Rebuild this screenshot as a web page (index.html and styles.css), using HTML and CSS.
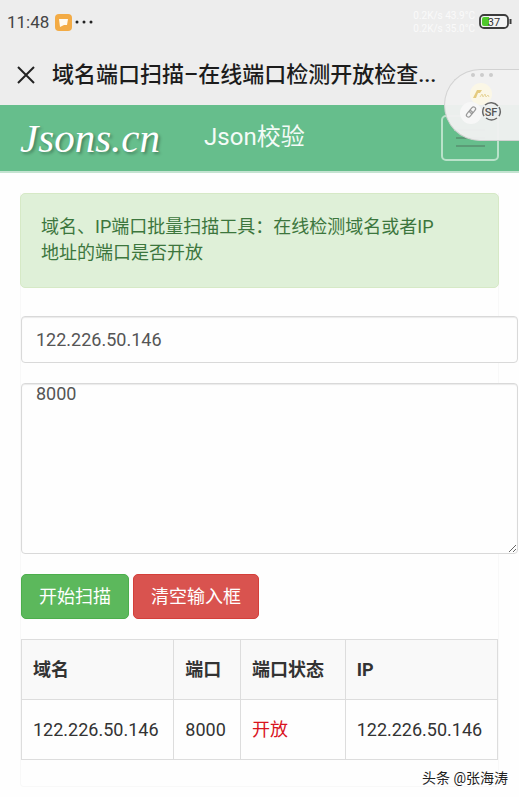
FILE: index.html
```html
<!DOCTYPE html>
<html lang="zh-CN">
<head>
    <meta charset="UTF-8">
    <meta name="viewport" content="width=device-width, initial-scale=1.0">
    <title>域名端口扫描–在线端口检测开放检查</title>
    <link rel="stylesheet" href="styles.css">
</head>
<body>
    <!-- Phone status bar -->
    <div class="status-bar">
        <span class="clock">11:48</span>
        <svg class="app-icon" width="17" height="17" viewBox="0 0 17 17">
            <rect width="17" height="17" rx="4" fill="#f3ab45"/>
            <path d="M4 5h9l-1 6H9l-4 2z" fill="#fffaf0"/>
        </svg>
        <svg class="more-dots" width="18" height="4" viewBox="0 0 18 4">
            <circle cx="2" cy="2" r="1.500"/>
            <circle cx="9" cy="2" r="1.500"/>
            <circle cx="16" cy="2" r="1.500"/>
        </svg>
        <div class="net-speed">
            <div>0.2K/s 43.9°C</div>
            <div>0.2K/s 35.0°C</div>
        </div>
        <svg class="battery" width="33" height="16" viewBox="0 0 33 16">
            <rect x="1" y="1" width="28" height="13" rx="4" fill="#f4f4f4" stroke="#3c3c3c" stroke-width="1.800"/>
            <path d="M5 3h5v9H5a2 2 0 0 1-2-2V5a2 2 0 0 1 2-2z" fill="#4fc92c"/>
            <path d="M31.500 5v5" stroke="#3c3c3c" stroke-width="2"/>
            <text x="15" y="12" text-anchor="middle">37</text>
        </svg>
    </div>

    <!-- Browser title -->
    <div class="title-bar">
        <button class="close-btn" aria-label="关闭">
            <svg width="20" height="20" viewBox="0 0 20 20">
                <path d="M2 2l16 16M18 2L2 18" fill="none" stroke="#222" stroke-width="2"/>
            </svg>
        </button>
        <h1>域名端口扫描–在线端口检测开放检查...</h1>
    </div>

    <nav class="navbar">
        <a class="logo" href="#">Jsons.cn</a>
        <a class="nav-link" href="#">Json校验</a>
        <button class="menu-btn" aria-label="菜单">
            <span class="menu-line"></span>
            <span class="menu-line"></span>
            <span class="menu-line"></span>
        </button>
    </nav>

    <main class="panel">
        <div class="alert">域名、IP端口批量扫描工具：在线检测域名或者IP地址的端口是否开放</div>
        <form class="scan-form">
            <input class="field" type="text" value="122.226.50.146" aria-label="域名">
            <textarea class="field ports" aria-label="端口">8000</textarea>
            <div class="buttons">
                <button class="btn btn-success" type="button">开始扫描</button>
                <button class="btn btn-danger" type="reset">清空输入框</button>
            </div>
        </form>
        <table>
            <thead>
                <tr>
                    <th class="col-host">域名</th>
                    <th class="col-port">端口</th>
                    <th class="col-state">端口状态</th>
                    <th class="col-host">IP</th>
                </tr>
            </thead>
            <tbody>
                <tr>
                    <td>122.226.50.146</td>
                    <td>8000</td>
                    <td class="open">开放</td>
                    <td>122.226.50.146</td>
                </tr>
            </tbody>
        </table>
    </main>

    <!-- Floating shortcut -->
    <div class="float-ball">
        <svg width="75" height="72" viewBox="0 0 75 72">
            <g fill="#ccc">
                <circle cx="28" cy="5" r="2"/>
                <circle cx="37" cy="5" r="2"/>
                <circle cx="46" cy="5" r="2"/>
            </g>
            <circle cx="36" cy="24" r="11" fill="#fbf7e6"/>
            <path d="M28 28l4-8h5l-2 3h-2l-2 5z" fill="#e5cb7e"/>
            <path d="M35 27l2-3 1 3 2-3 1 3 2-2 1 2" fill="none" stroke="#e8d79e" stroke-width="1"/>
            <circle cx="26" cy="43" r="11" fill="#f7f7f7"/>
            <g transform="rotate(-50 26 42)" fill="none" stroke="#999" stroke-width="1.200">
                <rect x="20" y="40" width="7" height="4" rx="2"/>
                <rect x="25" y="40" width="7" height="4" rx="2"/>
            </g>
            <g fill="none" stroke="#696969" stroke-width="1.500">
                <path d="M40 35a9 9 0 0 1 13 1"/>
                <path d="M54 37a9 9 0 0 1 0 9"/>
                <path d="M52 48a9 9 0 0 1-11 0"/>
                <path d="M39 46a9 9 0 0 1 0-9"/>
            </g>
            <text x="46" y="46" text-anchor="middle">SF</text>
        </svg>
    </div>

    <div class="watermark">头条 @张海涛</div>
</body>
</html>
```

FILE: styles.css
```css
* { margin: 0; padding: 0; box-sizing: border-box; }
body { position: relative; min-height: 100vh; font-family: Roboto, "Noto Sans CJK SC", sans-serif; font-size: 18px; line-height: 26px; color: #333; background: #fefefe; }
button, input, textarea { font: inherit; }

.status-bar { display: flex; align-items: center; height: 44px; padding: 0 7px; background: #ededed; }
.clock { font-size: 17px; color: #444; }
.app-icon { margin-left: 6px; }
.more-dots { margin-left: 3px; fill: #222; }
.net-speed { margin-left: auto; font-size: 10px; line-height: 13px; color: #fafafa; }
.battery { margin-left: 4px; }
.battery text { font-size: 11px; fill: #333; }

.title-bar { display: flex; align-items: center; height: 61px; padding: 0 16px; gap: 16px; background: #ededed; }
.title-bar h1 { font-size: 22px; font-weight: 500; color: #1c1c1c; white-space: nowrap; }
.close-btn { display: flex; background: none; border: none; cursor: pointer; }

.navbar { display: flex; align-items: flex-start; height: 68px; padding: 10px 20px; background: #66be8c; border-bottom: 2px solid #c4e3d1; }
.logo { font-family: "Liberation Serif", serif; font-style: italic; font-size: 41px; line-height: 46px; color: #fff; text-decoration: none; text-shadow: 2px 2px 3px rgba(0,0,0,0.3); }
.nav-link { margin-left: 44px; font-size: 24px; line-height: 44px; color: #f4fbf7; text-decoration: none; }
.menu-btn { display: flex; flex-direction: column; align-items: center; justify-content: center; gap: 6px; width: 58px; height: 46px; margin-left: auto; background: none; border: 2px solid #b9e2ca; border-radius: 5px; cursor: pointer; }
.menu-line { width: 29px; height: 2px; background: #5b9b76; }

.panel { margin: 0 20px; padding-bottom: 26px; border: 1px solid #f8f8f8; border-top: none; border-radius: 0 0 4px 4px; }
.alert { margin: 20px -1px 28px; padding: 20px 48px 21px 20px; color: #3c763d; background: #dff0d8; border: 1px solid #d6e9c6; border-radius: 5px; }
.scan-form { display: flex; flex-direction: column; gap: 20px; margin-bottom: 20px; }
.field { width: calc(100% + 20px); height: 47px; padding: 0 14px; color: #555; background: #fefefe; border: 1px solid #d9d9d9; border-radius: 4px; box-shadow: inset 0 1px 1px rgba(0,0,0,0.08); }
.ports { height: 171px; line-height: 20px; }
.buttons { display: flex; gap: 4px; }
.btn { height: 45px; padding: 0 17px; color: #fff; border: 1px solid; border-radius: 5px; cursor: pointer; }
.btn-success { background: #5cb85c; border-color: #4cae4c; }
.btn-danger { background: #d9534f; border-color: #d43f3a; }

table { width: 100%; border-collapse: collapse; }
th, td { height: 60px; padding: 0 11px; text-align: left; border: 1px solid #ddd; }
th { font-weight: bold; background: #f9f9f9; }
.col-host { width: 32%; }
.col-port { width: 14%; }
.col-state { width: 22%; }
.open { color: #d9141e; }

.float-ball { position: absolute; top: 69px; right: 0; width: 75px; height: 72px; background: rgba(240,240,240,0.96); border: 1px solid #d2d2d2; border-right: none; border-radius: 36px 0 0 36px; }
.float-ball text { font-size: 11px; font-weight: 500; fill: #555; }
.watermark { position: absolute; right: 11px; bottom: 6px; font-size: 14px; color: #222; text-shadow: 1px 1px 1px #fff; }
```
